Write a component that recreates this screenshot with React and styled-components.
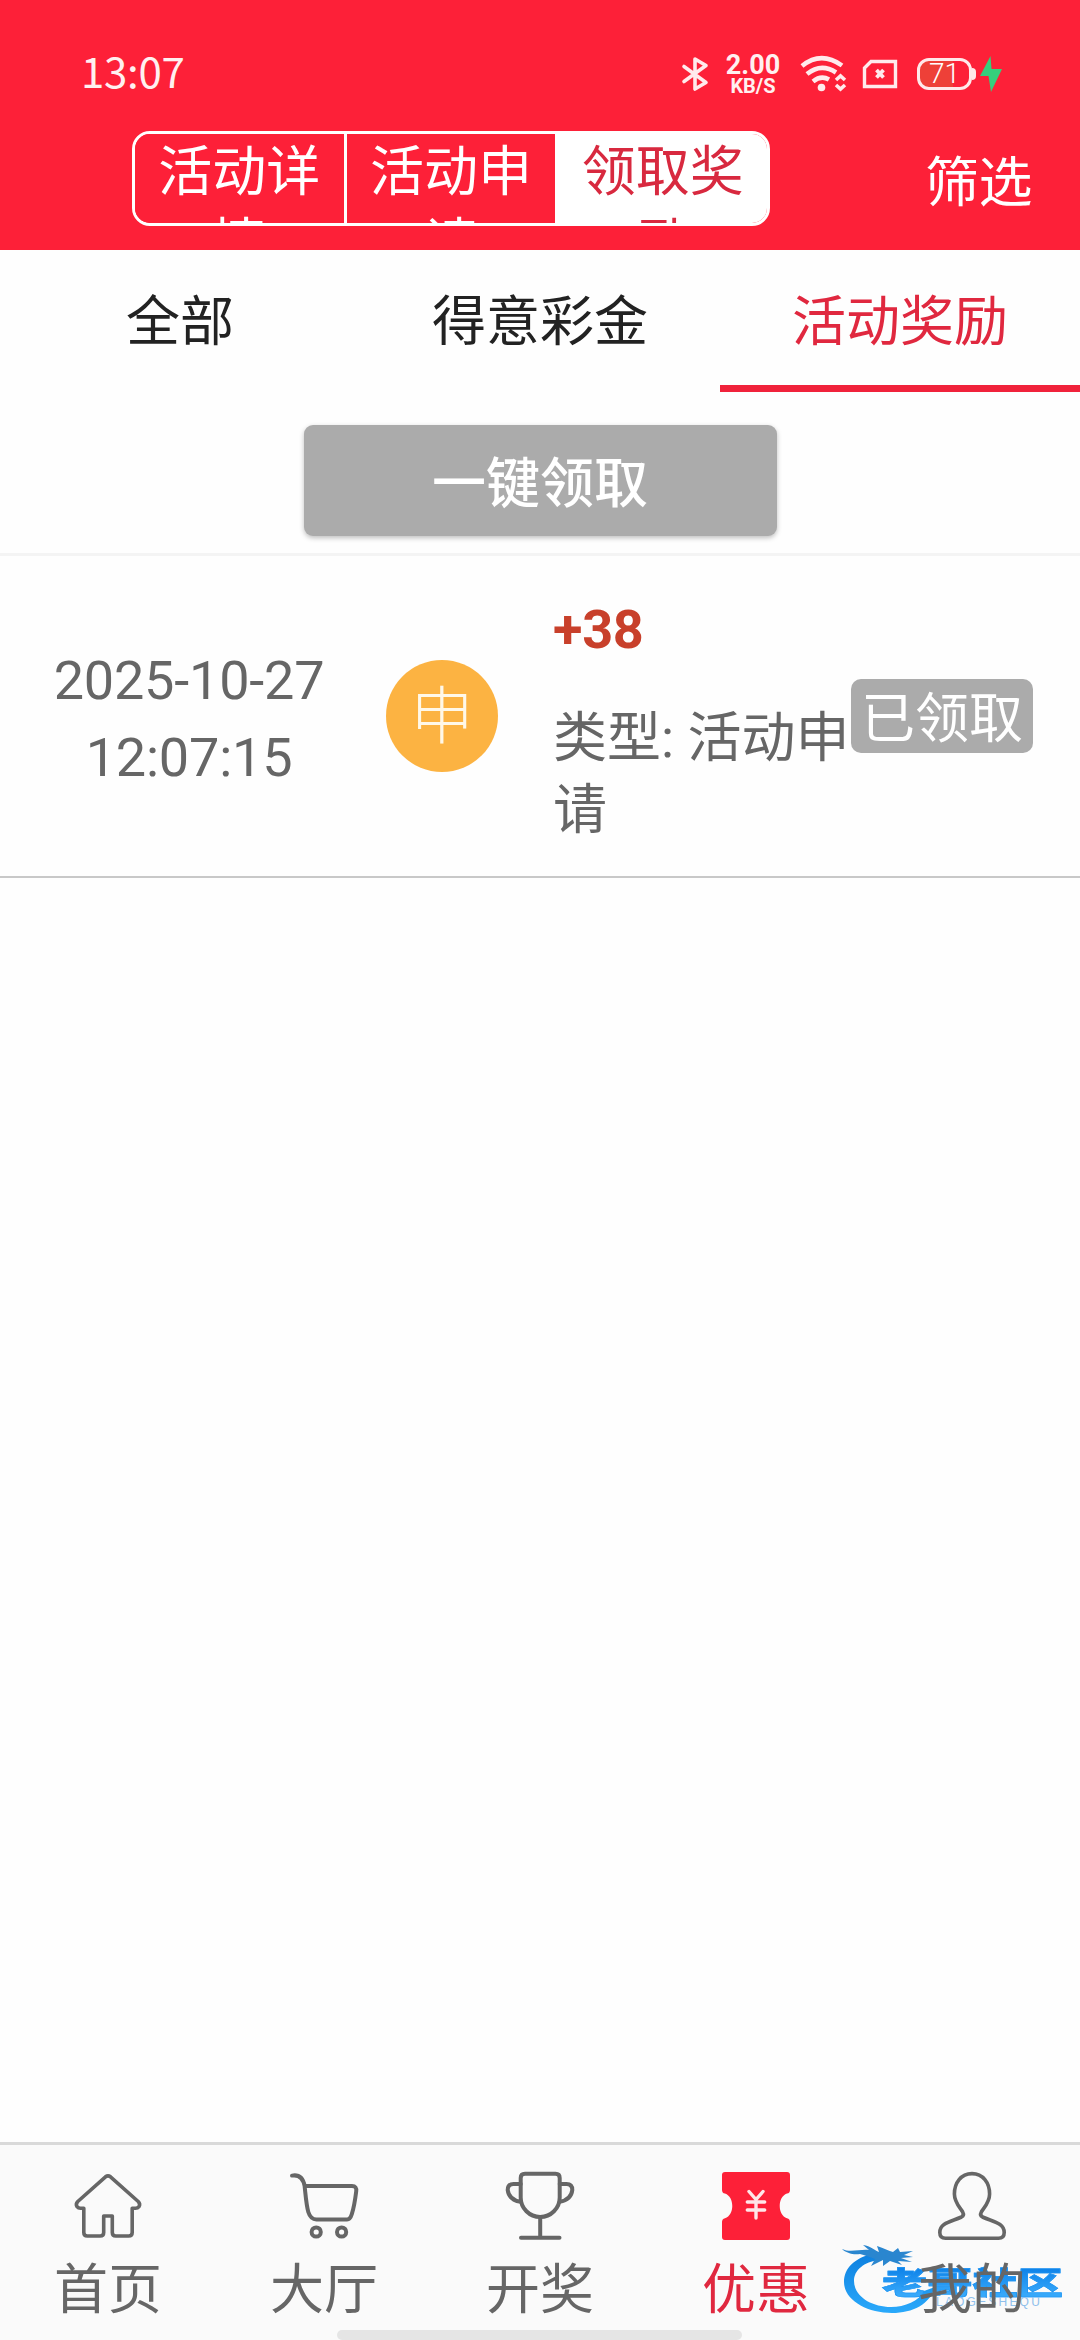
import React from "react";
import styled, { createGlobalStyle } from "styled-components";

const RED = "#fd2038";
const ACCENT = "#e0283f";
const GREY = "#666666";

const GlobalStyle = createGlobalStyle`
  * { box-sizing: border-box; }
  html, body { margin: 0; padding: 0; background: #fff; }
  body { font-family: Roboto, "Noto Sans CJK SC", sans-serif; font-size: 54px; line-height: 72px; }
  svg { display: block; flex: none; }
`;

const Screen = styled.div`
  width: 1080px;
  height: 2340px;
  display: flex;
  flex-direction: column;
  overflow: hidden;
  background: #fefefe;
`;

const Header = styled.header`
  height: 250px;
  flex: none;
  background: ${RED};
  color: #fff;
`;

const StatusBar = styled.div`
  height: 131px;
  padding: 16px 78px 0 81px;
  display: flex;
  align-items: center;
  justify-content: space-between;
`;

const Clock = styled.div`
  font-family: "Noto Sans CJK SC", sans-serif;
  font-size: 42px;
  line-height: 50px;
  padding-bottom: 7px;
  letter-spacing: -0.3px;
  color: #fff0f0;
`;

const StatusIcons = styled.div`
  display: flex;
  align-items: center;
`;

const NetSpeed = styled.div`
  width: 56px;
  padding-top: 3px;
  margin: 0 18px 0 16px;
  text-align: center;
  font-weight: 700;
  color: #fff0f0;
  white-space: nowrap;
`;

const SpeedValue = styled.div`
  font-size: 27px;
  line-height: 21px;
`;

const SpeedUnit = styled.div`
  font-size: 20px;
  line-height: 20px;
`;

const WifiGroup = styled.div`
  margin-right: 15px;
`;

const Battery = styled.div`
  width: 55px;
  height: 32px;
  margin-left: 19px;
  border: 3px solid #ffe9ea;
  border-radius: 12px;
  background: linear-gradient(90deg, #ee4038 68%, transparent 68%);
  font-size: 28px;
  line-height: 25px;
  font-weight: 300;
  text-align: center;
  font-family: Roboto, sans-serif;
`;

const BatteryTip = styled.div`
  width: 4px;
  height: 12px;
  margin-right: 4px;
  border-radius: 0 4px 4px 0;
  background: #ffe9ea;
`;

const TitleBar = styled.div`
  height: 95px;
  display: flex;
  padding: 0 48px 0 132px;
  justify-content: space-between;
`;

const Segments = styled.div`
  width: 638px;
  height: 95px;
  display: flex;
  border: 3px solid #fff;
  border-radius: 18px;
  overflow: hidden;
`;

const Segment = styled.button`
  flex: 1 1 0;
  min-width: 0;
  height: 89px;
  margin: 0;
  padding: 3px 22px 0;
  border: 0;
  border-left: ${(p) => (p.$first ? "0" : "3px solid #fff")};
  display: block;
  overflow: hidden;
  background: ${(p) => (p.$active ? "#fff" : RED)};
  color: ${(p) => (p.$active ? "#d8293f" : "#fff")};
  font: inherit;
  text-align: center;
  word-break: break-all;
`;

const SegmentText = styled.div`
  height: 86px;
  overflow: hidden;
`;

const Filter = styled.div`
  padding-top: 17px;
  letter-spacing: -0.5px;
`;

const Tabs = styled.nav`
  height: 142px;
  flex: none;
  display: grid;
  grid-template-columns: repeat(3, 1fr);
`;

const Tab = styled.div`
  padding-top: 37px;
  text-align: center;
  color: ${(p) => (p.$active ? ACCENT : "#222")};
  border-bottom: 7px solid ${(p) => (p.$active ? "#f0223b" : "transparent")};
`;

const ClaimArea = styled.div`
  height: 164px;
  flex: none;
  display: flex;
  justify-content: center;
  align-items: flex-start;
  padding-top: 33px;
  border-bottom: 3px solid #f4f4f4;
`;

const ClaimButton = styled.button`
  width: 473px;
  height: 111px;
  padding: 8px 0 0;
  border: 0;
  border-radius: 9px;
  background: #ababab;
  box-shadow: 0 2px 5px rgba(0, 0, 0, 0.25);
  color: #fff;
  font: inherit;
  font-weight: 500;
`;

const Record = styled.div`
  height: 322px;
  flex: none;
  display: flex;
  align-items: center;
  border-bottom: 2px solid #c8c8c8;
  color: ${GREY};
`;

const DateText = styled.div`
  width: 378px;
  padding-top: 5px;
  line-height: 77px;
  letter-spacing: -0.2px;
  text-align: center;
`;

const Avatar = styled.div`
  width: 112px;
  height: 112px;
  margin-left: 8px;
  border-radius: 50%;
  background: #fcb342;
  color: #fff8e8;
  display: flex;
  align-items: center;
  justify-content: center;
  font-family: "Noto Sans CJK SC", sans-serif;
  font-size: 63px;
  font-weight: 300;
  line-height: 102px;
  padding-bottom: 10px;
`;

const Info = styled.div`
  width: 298px;
  margin-left: 55px;
  padding-top: 6px;
`;

const Amount = styled.div`
  margin-bottom: 35px;
  line-height: 77px;
  font-weight: 700;
  letter-spacing: -0.3px;
  color: #c8402b;
`;

const Kind = styled.div`
  word-break: break-all;
`;

const Badge = styled.div`
  width: 182px;
  height: 74px;
  border-radius: 10px;
  background: #ababab;
  color: #fff;
  text-align: center;
  line-height: 81px;
  white-space: nowrap;
`;

const Blank = styled.main`
  flex: 1;
`;

const NavBar = styled.footer`
  position: relative;
  height: 198px;
  flex: none;
  display: grid;
  grid-template-columns: repeat(5, 1fr);
  border-top: 3px solid #d9d9d9;
  background: #fafafa;
`;

const NavItem = styled.div`
  display: flex;
  flex-direction: column;
  align-items: center;
  padding-top: 26px;
  color: ${(p) => (p.$active ? ACCENT : GREY)};
`;

const NavLabel = styled.div`
  position: relative;
  z-index: 1;
  margin-top: 12px;
`;

const HomeIndicator = styled.div`
  position: absolute;
  left: 337px;
  bottom: 0;
  width: 405px;
  height: 10px;
  border-radius: 5px;
  background: #e5e5e5;
`;

const Watermark = styled.div`
  position: absolute;
  left: 840px;
  top: 85px;
  width: 240px;
  height: 100px;
`;

const WatermarkName = styled.div`
  position: absolute;
  left: 42px;
  top: 32px;
  font-family: "Noto Sans CJK SC", sans-serif;
  font-size: 31px;
  line-height: 38px;
  font-weight: 900;
  white-space: nowrap;
  transform: scaleX(1.46);
  transform-origin: 0 0;
  color: transparent;
  background: linear-gradient(#1084ea 20%, #36a8fa 85%);
  background-clip: text;
  -webkit-background-clip: text;
  -webkit-text-stroke: 0.6px #2095f2;
`;

const WatermarkLatin = styled.div`
  position: absolute;
  left: 96px;
  top: 65px;
  font-family: "Liberation Sans", sans-serif;
  font-size: 12px;
  line-height: 14px;
  letter-spacing: 2.2px;
  color: #8fc0ec;
`;

const line = {
  fill: "none",
  stroke: GREY,
  strokeWidth: 4,
  strokeLinecap: "round",
  strokeLinejoin: "round",
};

const HomeIcon = () => (
  <svg width="72" height="72" viewBox="0 0 72 72" {...line} strokeWidth="3.6">
    <path d="M33.5 5.8 L5.8 30.5 Q3.4 33 5 35.6 Q6.3 37.3 8.5 37.3 H11.8 V61.5 Q11.8 65 15.3 65 H28.2 Q31.7 65 31.7 61.5 V45 H40.3 V61.5 Q40.3 65 43.8 65 H56.7 Q60.2 65 60.2 61.5 V37.3 H63.5 Q65.7 37.3 67 35.6 Q68.6 33 66.2 30.5 L38.5 5.8 Q36 4 33.5 5.8 Z" />
  </svg>
);

const CartIcon = () => (
  <svg width="72" height="72" viewBox="0 0 72 72" {...line}>
    <path d="M4 4.6 C11 3.4 15.2 7.5 16.6 15 H64 Q69 15 68.2 20.5 C67 30 65.8 37 63.8 43.2 Q62.2 48.5 59 48.5 H28.5 Q22.5 48.3 20.3 41 C18.3 34 17.6 24 16.6 15" />
    <circle cx="28.2" cy="61" r="4.6" />
    <circle cx="53.6" cy="61" r="4.6" />
  </svg>
);

const TrophyIcon = () => (
  <svg width="72" height="72" viewBox="0 0 72 72" {...line}>
    <path d="M21 2.8 H51.5 Q55.7 2.8 55.7 7 V26.5 A19.5 19.5 0 0 1 16.7 26.5 V7 Q16.7 2.8 21 2.8 Z" />
    <path d="M16.7 13 H9.5 Q3.7 13 3.7 19 Q4.8 28.8 16.7 30.8 M55.7 13 H62.5 Q68.3 13 68.3 19 Q67.2 28.8 55.7 30.8 M36.2 46 V66.8 M17 66.8 H55.5" />
  </svg>
);

const TicketIcon = () => (
  <svg width="72" height="72" viewBox="0 0 72 72">
    <path
      fill={RED}
      d="M5 1 H67 Q70 1 70 4 V19 Q70 22 67 22.6 C57.3 26 57.3 44 67 47.2 Q70 48 70 51 V66 Q70 69 67 69 H5 Q2 69 2 66 V51 Q2 48 5 47.2 C14.7 44 14.7 26 5 22.6 Q2 22 2 19 V4 Q2 1 5 1 Z"
    />
    <path
      d="M29 20.5 L36 28.5 L43 20.5 M36 28.5 V47 M27.3 31 H44.7 M27.3 39 H44.7"
      fill="none"
      stroke="#ffe6e8"
      strokeWidth="3.4"
      strokeLinecap="round"
    />
  </svg>
);

const UserIcon = () => (
  <svg width="72" height="72" viewBox="0 0 72 72" {...line} strokeWidth="3.6">
    <path d="M36 2.6 C25 2.6 18.4 12 18.4 23 C18.4 31.5 24 36.5 26.7 41 Q28.5 44.3 25.5 46 C18 49.3 13 50 8 53.5 Q3.8 56.5 3.8 61.5 Q3.8 67.3 9.5 67.3 H62.5 Q68.2 67.3 68.2 61.5 Q68.2 56.5 64 53.5 C59 50 54 49.3 46.5 46 Q43.5 44.3 45.3 41 C48 36.5 53.6 31.5 53.6 23 C53.6 12 47 2.6 36 2.6 Z" />
  </svg>
);

const BluetoothIcon = () => (
  <svg width="28" height="36" viewBox="0 0 28 36" fill="none" stroke="#ffeaec" strokeWidth="3.6" strokeLinejoin="round" strokeLinecap="round">
    <path d="M3 10.5 L25 26.5 L14 33 V3 L25 9.5 L3 25.5" />
  </svg>
);

const WifiIcon = () => (
  <svg width="48" height="38" viewBox="0 0 48 38" fill="none" stroke="#ffeaec" strokeWidth="4.6">
    <path d="M3 11 Q22 -4.5 43 10.5 M8 19 Q22 7.5 37 17.5 M14 26.5 Q22 20 30 24.5" />
    <circle cx="22.5" cy="32.5" r="3.8" fill="#ffeaec" stroke="none" />
    <path d="M37 25 L41.5 21 L46 25 M37 30 L41.5 34 L46 30" strokeWidth="3.6" />
  </svg>
);

const SimIcon = () => (
  <svg width="36" height="30" viewBox="0 0 36 30" fill="none" stroke="#ffeaec" strokeWidth="3.4">
    <path d="M9 2.5 H33.5 V27.5 H2.5 V9 Z" />
    <path d="M14.5 11 L21.5 18.5 M21.5 11 L14.5 18.5" strokeWidth="3.8" />
  </svg>
);

const BoltIcon = () => (
  <svg width="22" height="36" viewBox="0 0 22 36">
    <path fill="#35cf7c" d="M10.5 0 L0 20 H8.5 L11 36 L22 13 H11.5 Z" />
  </svg>
);

const DragonMark = () => (
  <svg width="100" height="100" viewBox="0 0 100 100">
    <defs>
      <linearGradient id="ring" x1="0" y1="0" x2="0" y2="1">
        <stop offset="0" stopColor="#0d80df" />
        <stop offset="1" stopColor="#2aa9fb" />
      </linearGradient>
    </defs>
    <path
      fill="url(#ring)"
      d="M32 24 C15 28 4 38 4 52 C4 70 27 83 52 83 C73 83 90 74 95 57 L84 61 C79 71 65 77 51 77 C31 77 14 66 14 51 C14 40 24 32 39 30 L50 29 L54 25 Z"
    />
    <path
      fill="#2a86cf"
      d="M2 19 C10 23 20 19 29 20 L23 15 C31 16 34 20 39 22 L37 16 C44 18 49 21 53 22 L58 18 L60 22 L73 21 L64 25 L73 27 L61 28 L72 32 L58 31 L62 35 L50 31 L43 36 L43 30 L31 36 L35 29 C29 27 25 25 20 24 C13 25 6 23 2 19 Z"
    />
  </svg>
);

const segments = ["活动详情", "活动申请", "领取奖励"];
const tabs = ["全部", "得意彩金", "活动奖励"];
const navItems = [
  { label: "首页", Icon: HomeIcon },
  { label: "大厅", Icon: CartIcon },
  { label: "开奖", Icon: TrophyIcon },
  { label: "优惠", Icon: TicketIcon, active: true },
  { label: "我的", Icon: UserIcon },
];

export default function App() {
  return (
    <Screen>
      <GlobalStyle />
      <Header>
        <StatusBar>
          <Clock>13:07</Clock>
          <StatusIcons>
            <BluetoothIcon />
            <NetSpeed>
              <SpeedValue>2.00</SpeedValue>
              <SpeedUnit>KB/S</SpeedUnit>
            </NetSpeed>
            <WifiGroup>
              <WifiIcon />
            </WifiGroup>
            <SimIcon />
            <Battery>71</Battery>
            <BatteryTip />
            <BoltIcon />
          </StatusIcons>
        </StatusBar>
        <TitleBar>
          <Segments>
            {segments.map((s, i) => (
              <Segment key={s} $first={i === 0} $active={i === 2}>
                <SegmentText>{s}</SegmentText>
              </Segment>
            ))}
          </Segments>
          <Filter>筛选</Filter>
        </TitleBar>
      </Header>
      <Tabs>
        {tabs.map((t, i) => (
          <Tab key={t} $active={i === 2}>
            {t}
          </Tab>
        ))}
      </Tabs>
      <ClaimArea>
        <ClaimButton>一键领取</ClaimButton>
      </ClaimArea>
      <Record>
        <DateText>
          2025-10-27
          <br />
          12:07:15
        </DateText>
        <Avatar>申</Avatar>
        <Info>
          <Amount>+38</Amount>
          <Kind>类型: 活动申请</Kind>
        </Info>
        <Badge>已领取</Badge>
      </Record>
      <Blank />
      <NavBar>
        {navItems.map(({ label, Icon, active }) => (
          <NavItem key={label} $active={active}>
            <Icon />
            <NavLabel>{label}</NavLabel>
          </NavItem>
        ))}
        <Watermark>
          <DragonMark />
          <WatermarkName>老哥社区</WatermarkName>
          <WatermarkLatin>LAOGESHEQU</WatermarkLatin>
        </Watermark>
        <HomeIndicator />
      </NavBar>
    </Screen>
  );
}
